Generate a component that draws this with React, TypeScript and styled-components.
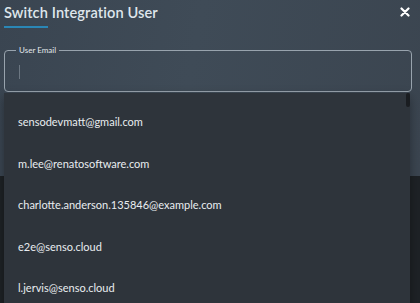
import styled, { createGlobalStyle } from "styled-components"

const GlobalStyle = createGlobalStyle`
    html, body {
        margin: 0;
        padding: 0;
        background: #1e2226;
        font-family: Lato, "Open Sans", "Liberation Sans", sans-serif;
    }
    #root {
        width: 420px;
        height: 303px;
        overflow: hidden;
        position: relative;
    }
`

const emails = [
    "sensodevmatt@gmail.com",
    "m.lee@renatosoftware.com",
    "charlotte.anderson.135846@example.com",
    "e2e@senso.cloud",
    "l.jervis@senso.cloud",
]

export default function App() {
    return (
        <>
            <GlobalStyle />
            <Dialog>
                <Header>
                    <Title>Switch Integration User</Title>
                    <CloseButton aria-label="close">
                        <svg width="10" height="10" viewBox="0 0 10 10">
                            <path d="M1.5 1.5 L8.5 8.5 M8.5 1.5 L1.5 8.5" stroke="#ffffff" strokeWidth="2.2" strokeLinecap="round" />
                        </svg>
                    </CloseButton>
                </Header>
                <Underline />
                <Field>
                    <Legend>User Email</Legend>
                    <Caret />
                </Field>
            </Dialog>
            <Menu>
                {emails.map(email => (
                    <Option key={email}>{email}</Option>
                ))}
                <Thumb />
            </Menu>
        </>
    )
}

const Dialog = styled.div`
    width: 420px;
    height: 176px;
    box-sizing: border-box;
    padding: 0 8px 0 4px;
    background: linear-gradient(100deg, #3a4551 0%, #3f4b57 45%, #3b4550 100%);
`

const Header = styled.div`
    display: flex;
    align-items: center;
    justify-content: space-between;
    height: 24px;
`

const Title = styled.h2`
    margin: 0;
    font-size: 14.6px;
    font-weight: 600;
    color: #dfe6ec;
    letter-spacing: 0.1px;
`

const CloseButton = styled.button`
    background: none;
    border: 0;
    padding: 0;
    margin-right: 1px;
    width: 12px;
    height: 12px;
    display: flex;
    align-items: center;
    justify-content: center;
    cursor: pointer;
`

const Underline = styled.div`
    width: 44px;
    height: 2px;
    margin-top: 2px;
    background: #2a87b6;
`

const Field = styled.fieldset`
    margin: 18px 0 0 0;
    height: 46px;
    box-sizing: border-box;
    border: 1.5px solid #98a3ad;
    border-radius: 4px;
    padding: 0 14px;
`

const Legend = styled.legend`
    font-size: 8px;
    color: #e3e8ec;
    padding: 0 3px;
    margin-left: -3px;
    line-height: 8px;
`

const Caret = styled.div`
    width: 1px;
    height: 14px;
    margin-top: 11px;
    background: #6c7782;
`

const Menu = styled.ul`
    position: absolute;
    top: 93px;
    left: 4px;
    width: 406px;
    height: 230px;
    margin: 0;
    padding: 8px 0 0 0;
    list-style: none;
    box-sizing: border-box;
    background: #2e343b;
    box-shadow: 0 4px 10px rgba(0, 0, 0, 0.35);
`

const Option = styled.li`
    height: 41.5px;
    display: flex;
    align-items: center;
    padding-left: 14px;
    font-size: 11px;
    color: #e9edf0;
`

const Thumb = styled.div`
    position: absolute;
    top: 0;
    right: 0;
    width: 4px;
    height: 14px;
    border-radius: 2px;
    background: #1a1d21;
`
